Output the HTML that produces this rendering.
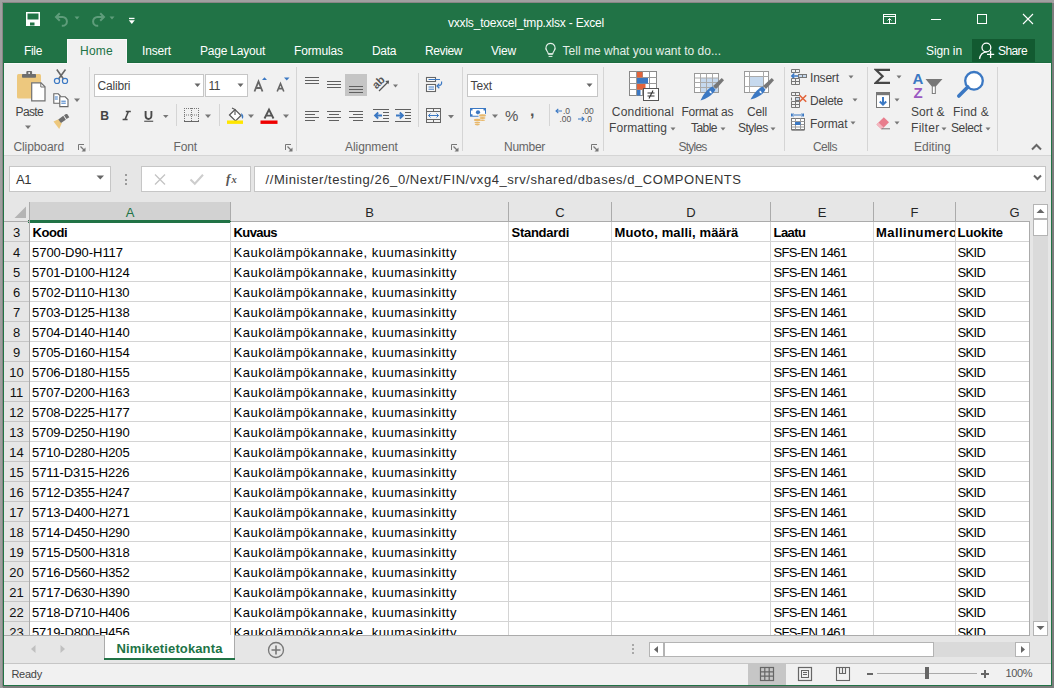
<!DOCTYPE html>
<html><head><meta charset="utf-8"><style>
html,body{margin:0;padding:0;width:1054px;height:688px;overflow:hidden;position:relative;font-family:"Liberation Sans", sans-serif;}
svg{display:block}
</style></head><body>
<div style="position:absolute;left:0px;top:0px;width:1054px;height:688px;background:#a0a0a0;"></div>
<div style="position:absolute;left:2px;top:2px;width:1050px;height:685px;background:#898686;"></div>
<div style="position:absolute;left:1052px;top:3px;width:2px;height:685px;background:#7c7c7c;"></div>
<div style="position:absolute;left:3px;top:686px;width:1051px;height:2px;background:#7c7c7c;"></div>
<div style="position:absolute;left:3px;top:3px;width:1049px;height:683px;background:#217346;"></div>
<div style="position:absolute;left:4px;top:62px;width:1047px;height:1px;background:#1c6b3f;"></div>
<div style="position:absolute;left:67px;top:39px;width:60px;height:24px;background:#f1f1f1;"></div>
<div style="position:absolute;left:67px;top:39px;width:60px;height:1px;background:#fafafa;"></div>
<div style="position:absolute;left:67px;top:39px;width:1px;height:24px;background:#fafafa;"></div>
<div style="position:absolute;left:126px;top:39px;width:1px;height:24px;background:#fafafa;"></div>
<div style="position:absolute;left:4px;top:63px;width:1047px;height:92px;background:#f1f1f1;"></div>
<div style="position:absolute;left:4px;top:63px;width:63px;height:1px;background:#fafafa;"></div>
<div style="position:absolute;left:127px;top:63px;width:924px;height:1px;background:#fafafa;"></div>
<div style="position:absolute;left:4px;top:155px;width:1047px;height:1px;background:#d5d5d5;"></div>
<div style="position:absolute;left:4px;top:156px;width:1047px;height:66px;background:#e6e6e6;"></div>
<svg style="position:absolute;left:24px;top:10px" width="18" height="18" viewBox="0 0 18 18"><path d="M2.75 2.75 H15.25 V15.25 H2.75z" fill="none" stroke="#fff" stroke-width="1.5"/><rect x="2" y="9.5" width="14" height="6" fill="#fff"/><rect x="6" y="12.5" width="4.5" height="3" fill="#217346"/></svg>
<svg style="position:absolute;left:53px;top:11px" width="30" height="16" viewBox="0 0 30 16"><path d="M3.5 6 H9.5 A4.4 4.4 0 0 1 9.5 14.8 H8.8" fill="none" stroke="#5f9d7b" stroke-width="2"/><path d="M6.8 2.2 L3 6 L6.8 9.8" fill="none" stroke="#5f9d7b" stroke-width="2"/><path d="M21.5 5.5 h5 l-2.5 3z" fill="#5f9d7b"/></svg>
<svg style="position:absolute;left:89px;top:11px" width="30" height="16" viewBox="0 0 30 16"><path d="M14.5 6 H8.5 A4.4 4.4 0 0 0 8.5 14.8 H9.2" fill="none" stroke="#5f9d7b" stroke-width="2"/><path d="M11.2 2.2 L15 6 L11.2 9.8" fill="none" stroke="#5f9d7b" stroke-width="2"/><path d="M20.5 5.5 h5 l-2.5 3z" fill="#5f9d7b"/></svg>
<svg style="position:absolute;left:127px;top:16px" width="9" height="10" viewBox="0 0 9 10"><rect x="2" y="1.8" width="5.5" height="1.3" fill="#fff"/><path d="M1.8 4.2 h6 l-3 3.8z" fill="#fff"/></svg>
<svg style="position:absolute;left:882px;top:13px" width="16" height="12" viewBox="0 0 16 12"><rect x="1.5" y="1.5" width="12" height="9" fill="none" stroke="#fff" stroke-width="1"/><path d="M1.5 3.5 h12" stroke="#fff" stroke-width="1"/><path d="M7.5 10.5 V5.5 M5.5 7.5 L7.5 5.5 L9.5 7.5" fill="none" stroke="#fff" stroke-width="1"/></svg>
<div style="position:absolute;left:931px;top:19px;width:10px;height:1px;background:#fff;"></div>
<svg style="position:absolute;left:976px;top:13px" width="12" height="12" viewBox="0 0 12 12"><rect x="1.5" y="1.5" width="9" height="9" fill="none" stroke="#fff" stroke-width="1"/></svg>
<svg style="position:absolute;left:1022px;top:13px" width="12" height="12" viewBox="0 0 12 12"><path d="M1 1 L11 11 M11 1 L1 11" stroke="#fff" stroke-width="1.1"/></svg>
<svg style="position:absolute;left:543px;top:42px" width="14" height="18" viewBox="0 0 14 18"><path d="M7.5 1.4 A4.6 4.6 0 0 0 3.9 8.9 C4.6 9.8 5.1 10.6 5.2 11.8 H9.8 C9.9 10.6 10.4 9.8 11.1 8.9 A4.6 4.6 0 0 0 7.5 1.4z" fill="none" stroke="#e4efe8" stroke-width="1.1"/><rect x="5.2" y="11.4" width="4.6" height="1.4" fill="#e4efe8"/><rect x="5.6" y="13.9" width="3.8" height="1" fill="#e4efe8"/></svg>
<div style="position:absolute;left:972px;top:39px;width:63px;height:23px;background:#125a31;"></div>
<svg style="position:absolute;left:978px;top:41px" width="18" height="21" viewBox="0 0 18 21"><circle cx="8.4" cy="6.5" r="4.4" fill="none" stroke="#fff" stroke-width="1.3"/><path d="M1.5 17.8 C2.2 13.8 5 11.2 8.8 10.9" fill="none" stroke="#fff" stroke-width="1.3"/><path d="M12.6 9.8 v7.2 M9 13.4 h7.2" stroke="#fff" stroke-width="1.3"/></svg>
<div style="position:absolute;left:89px;top:67px;width:1px;height:84px;background:#d5d5d5;"></div>
<div style="position:absolute;left:296px;top:67px;width:1px;height:84px;background:#d5d5d5;"></div>
<div style="position:absolute;left:462px;top:67px;width:1px;height:84px;background:#d5d5d5;"></div>
<div style="position:absolute;left:603px;top:67px;width:1px;height:84px;background:#d5d5d5;"></div>
<div style="position:absolute;left:784px;top:67px;width:1px;height:84px;background:#d5d5d5;"></div>
<div style="position:absolute;left:867px;top:67px;width:1px;height:84px;background:#d5d5d5;"></div>
<div style="position:absolute;left:997px;top:67px;width:1px;height:84px;background:#d5d5d5;"></div>
<div style="position:absolute;left:176px;top:104px;width:1px;height:22px;background:#d5d5d5;"></div>
<div style="position:absolute;left:219px;top:104px;width:1px;height:22px;background:#d5d5d5;"></div>
<div style="position:absolute;left:418px;top:73px;width:1px;height:54px;background:#d5d5d5;"></div>
<div style="position:absolute;left:549px;top:104px;width:1px;height:22px;background:#d5d5d5;"></div>
<svg style="position:absolute;left:78px;top:144px" width="8" height="8" viewBox="0 0 8 8"><path d="M0.5 6 V0.5 H6" fill="none" stroke="#777" stroke-width="1"/><path d="M2.5 2.5 L6 6" stroke="#777" stroke-width="1.2"/><path d="M7.5 3.5 V7.5 H3.5z" fill="#777"/></svg>
<svg style="position:absolute;left:285px;top:144px" width="8" height="8" viewBox="0 0 8 8"><path d="M0.5 6 V0.5 H6" fill="none" stroke="#777" stroke-width="1"/><path d="M2.5 2.5 L6 6" stroke="#777" stroke-width="1.2"/><path d="M7.5 3.5 V7.5 H3.5z" fill="#777"/></svg>
<svg style="position:absolute;left:451px;top:144px" width="8" height="8" viewBox="0 0 8 8"><path d="M0.5 6 V0.5 H6" fill="none" stroke="#777" stroke-width="1"/><path d="M2.5 2.5 L6 6" stroke="#777" stroke-width="1.2"/><path d="M7.5 3.5 V7.5 H3.5z" fill="#777"/></svg>
<svg style="position:absolute;left:591px;top:144px" width="8" height="8" viewBox="0 0 8 8"><path d="M0.5 6 V0.5 H6" fill="none" stroke="#777" stroke-width="1"/><path d="M2.5 2.5 L6 6" stroke="#777" stroke-width="1.2"/><path d="M7.5 3.5 V7.5 H3.5z" fill="#777"/></svg>
<svg style="position:absolute;left:15px;top:69px" width="32" height="34" viewBox="0 0 32 34"><rect x="2" y="5" width="24" height="24.6" rx="1.5" fill="#edc87e"/><rect x="7" y="5" width="14" height="3.8" rx="0.8" fill="#6d6d6d"/><rect x="11.3" y="2" width="5.8" height="3.6" rx="1" fill="#6d6d6d"/><rect x="13.3" y="3.2" width="1.7" height="1.7" fill="#f3f3f3"/><path d="M16.7 13.8 H26 L30 17.8 V31.8 H16.7z" fill="#fff" stroke="#707070" stroke-width="1.2"/><path d="M25.8 13.8 V18 H30" fill="none" stroke="#707070" stroke-width="1"/></svg>
<svg style="position:absolute;left:24px;top:124px" width="8" height="6" viewBox="0 0 8 6"><path d="M1 1.5 h6 l-3 3.5z" fill="#777"/></svg>
<svg style="position:absolute;left:52px;top:67px" width="17" height="17" viewBox="0 0 17 17"><path d="M4.8 2.5 L11.5 12 M13.5 2.5 L6.5 12" stroke="#666" stroke-width="1.6"/><circle cx="5" cy="14" r="2.6" fill="none" stroke="#3b78c3" stroke-width="1.2"/><circle cx="13" cy="14" r="2.6" fill="none" stroke="#3b78c3" stroke-width="1.2"/></svg>
<svg style="position:absolute;left:52px;top:92px" width="17" height="16" viewBox="0 0 17 16"><path d="M1.8 1.8 H6.2 L8.2 3.8 V11.2 H1.8z" fill="#fff" stroke="#666" stroke-width="1.1"/><path d="M7.8 4.8 H13.2 L16 7.6 V14.6 H7.8z" fill="#fff" stroke="#666" stroke-width="1.1"/><path d="M2.8 5 h3 M2.8 7 h3 M9.3 9.2 h4.5 M9.3 11.2 h4.5" stroke="#3b78c3" stroke-width="1"/></svg>
<svg style="position:absolute;left:73px;top:97px" width="8" height="6" viewBox="0 0 8 6"><path d="M1 1.5 h6 l-3 3.5z" fill="#777"/></svg>
<svg style="position:absolute;left:52px;top:114px" width="18" height="17" viewBox="0 0 18 17"><path d="M1.5 7.5 L6.5 5.2 L9.8 9.3 L7.2 15z" fill="#edc87e"/><path d="M6.3 5.6 L11.3 1.8 L13.8 5.8 L9 9z" fill="#6d6d6d"/><path d="M12 1.3 L14.8 -0.6 L17.3 3.3 L14.5 5.1z" fill="#6d6d6d"/></svg>
<div style="position:absolute;left:94px;top:74px;width:108px;height:21px;border:1px solid #c6c6c6;background:#fff"></div>
<div style="position:absolute;left:205px;top:74px;width:41px;height:21px;border:1px solid #c6c6c6;background:#fff"></div>
<svg style="position:absolute;left:194px;top:83px" width="8" height="5" viewBox="0 0 8 5"><path d="M0.5 0.5 h6 l-3 3.5z" fill="#666"/></svg>
<svg style="position:absolute;left:237px;top:83px" width="8" height="5" viewBox="0 0 8 5"><path d="M0.5 0.5 h6 l-3 3.5z" fill="#666"/></svg>
<svg style="position:absolute;left:253px;top:76px" width="16" height="17" viewBox="0 0 16 17"><path d="M1.5 15.5 L5.5 5.5 L9.5 15.5 M3 12 h5" fill="none" stroke="#666" stroke-width="1.8"/><path d="M9 4 h5 l-2.5 -2.8z" fill="#3b78c3"/></svg>
<svg style="position:absolute;left:276px;top:76px" width="15" height="17" viewBox="0 0 15 17"><path d="M1.2 15.5 L4.5 7.5 L7.8 15.5 M2.5 12.6 h4" fill="none" stroke="#666" stroke-width="1.6"/><path d="M8 1.5 h5.5 l-2.75 3z" fill="#3b78c3"/></svg>
<svg style="position:absolute;left:98px;top:108px" width="13" height="15" viewBox="0 0 13 15"><text x="2.2" y="12" font-size="12.2" font-weight="bold" font-family="Liberation Sans" fill="#444">B</text></svg>
<svg style="position:absolute;left:120px;top:108px" width="12" height="15" viewBox="0 0 12 15"><path d="M5.8 3.6 H10.8 M2.6 11.4 H7.6 M8.3 3.6 L5.1 11.4" fill="none" stroke="#4a4a4a" stroke-width="1.5"/></svg>
<svg style="position:absolute;left:142px;top:108px" width="13" height="16" viewBox="0 0 13 16"><path d="M3.6 3 V7.8 C3.6 12 9.4 12 9.4 7.8 V3" fill="none" stroke="#4a4a4a" stroke-width="1.9"/><rect x="2.2" y="12.7" width="9" height="1.1" fill="#4a4a4a"/></svg>
<svg style="position:absolute;left:162px;top:114px" width="8" height="6" viewBox="0 0 8 6"><path d="M1 1 h5.5 l-2.75 3z" fill="#777"/></svg>
<svg style="position:absolute;left:183px;top:107px" width="17" height="17" viewBox="0 0 17 17"><path d="M1.5 1 V14 M15.5 1 V14 M8.5 1 V14 M1 1.5 H16 M1 8 H16" fill="none" stroke="#777" stroke-width="1" stroke-dasharray="1 1"/><path d="M1 14.5 H16" stroke="#666" stroke-width="1"/></svg>
<svg style="position:absolute;left:204px;top:113px" width="8" height="6" viewBox="0 0 8 6"><path d="M1 1.5 h6 l-3 3.5z" fill="#777"/></svg>
<svg style="position:absolute;left:226px;top:106px" width="20" height="19" viewBox="0 0 20 19"><path d="M3.5 9 L9 3.5 L15 9.5 L9.5 15z" fill="#fff" stroke="#555" stroke-width="1.2"/><path d="M6 2 L9 3.5 V9" fill="none" stroke="#555" stroke-width="1.1"/><path d="M15 7 C17.5 8.5 18 11 16.5 13 C15.5 11.5 15.5 9 15 7z" fill="#3b78c3"/><rect x="1" y="14.5" width="16" height="3.4" fill="#ffe600"/></svg>
<svg style="position:absolute;left:247px;top:113px" width="8" height="6" viewBox="0 0 8 6"><path d="M1 1.5 h6 l-3 3.5z" fill="#777"/></svg>
<svg style="position:absolute;left:259px;top:106px" width="20" height="19" viewBox="0 0 20 19"><path d="M5.5 12.5 L10 3.5 L14.5 12.5 M7 9.6 h6" fill="none" stroke="#555" stroke-width="1.9"/><rect x="1.5" y="14.5" width="17" height="3.4" fill="#e00"/></svg>
<svg style="position:absolute;left:282px;top:113px" width="8" height="6" viewBox="0 0 8 6"><path d="M1 1.5 h6 l-3 3.5z" fill="#777"/></svg>
<div style="position:absolute;left:305px;top:77px;width:14px;height:1px;background:#606060;"></div>
<div style="position:absolute;left:305px;top:80px;width:14px;height:1px;background:#606060;"></div>
<div style="position:absolute;left:305px;top:83px;width:14px;height:1px;background:#606060;"></div>
<div style="position:absolute;left:327px;top:81px;width:14px;height:1px;background:#606060;"></div>
<div style="position:absolute;left:327px;top:84px;width:14px;height:1px;background:#606060;"></div>
<div style="position:absolute;left:327px;top:87px;width:14px;height:1px;background:#606060;"></div>
<div style="position:absolute;left:345px;top:74px;width:22px;height:22px;background:#c5c5c5;"></div>
<div style="position:absolute;left:349px;top:86px;width:14px;height:1px;background:#606060;"></div>
<div style="position:absolute;left:349px;top:89px;width:14px;height:1px;background:#606060;"></div>
<div style="position:absolute;left:349px;top:92px;width:14px;height:1px;background:#606060;"></div>
<svg style="position:absolute;left:371px;top:74px" width="28" height="20" viewBox="0 0 28 20"><text x="0" y="0" font-size="11" font-weight="bold" font-family="Liberation Sans" fill="#555" transform="translate(5.5 15.5) rotate(-45)">ab</text><path d="M8 17 L17.5 7.5" stroke="#555" stroke-width="1.2"/><path d="M14.2 7 L18 6.5 L17.5 10.3z" fill="#555"/><path d="M22 10.5 h5 l-2.5 3z" fill="#777"/></svg>
<svg style="position:absolute;left:425px;top:75px" width="19" height="18" viewBox="0 0 19 18"><rect x="1.5" y="2.5" width="9" height="4" fill="#fff" stroke="#666" stroke-width="1.1"/><rect x="1.5" y="9.5" width="9" height="7" fill="#fff" stroke="#666" stroke-width="1.1"/><path d="M3.5 4.5 H15 M3.5 12 H9 M3.5 14.2 H9" stroke="#3b78c3" stroke-width="1"/><path d="M16.6 6.5 C17 9.5 15.5 11 12.5 11" fill="none" stroke="#3b78c3" stroke-width="1.2"/><path d="M14.3 8.8 L12 11 L14.3 13.2" fill="none" stroke="#3b78c3" stroke-width="1.2"/></svg>
<div style="position:absolute;left:305px;top:111px;width:14px;height:1px;background:#606060;"></div>
<div style="position:absolute;left:327px;top:111px;width:14px;height:1px;background:#606060;"></div>
<div style="position:absolute;left:349px;top:111px;width:14px;height:1px;background:#606060;"></div>
<div style="position:absolute;left:305px;top:114px;width:10px;height:1px;background:#606060;"></div>
<div style="position:absolute;left:329px;top:114px;width:10px;height:1px;background:#606060;"></div>
<div style="position:absolute;left:353px;top:114px;width:10px;height:1px;background:#606060;"></div>
<div style="position:absolute;left:305px;top:117px;width:14px;height:1px;background:#606060;"></div>
<div style="position:absolute;left:327px;top:117px;width:14px;height:1px;background:#606060;"></div>
<div style="position:absolute;left:349px;top:117px;width:14px;height:1px;background:#606060;"></div>
<div style="position:absolute;left:305px;top:120px;width:10px;height:1px;background:#606060;"></div>
<div style="position:absolute;left:329px;top:120px;width:10px;height:1px;background:#606060;"></div>
<div style="position:absolute;left:353px;top:120px;width:10px;height:1px;background:#606060;"></div>
<div style="position:absolute;left:373px;top:109px;width:16px;height:1px;background:#606060;"></div>
<div style="position:absolute;left:383px;top:112px;width:6px;height:1px;background:#606060;"></div>
<div style="position:absolute;left:383px;top:115px;width:6px;height:1px;background:#606060;"></div>
<div style="position:absolute;left:383px;top:118px;width:6px;height:1px;background:#606060;"></div>
<div style="position:absolute;left:373px;top:121px;width:16px;height:1px;background:#606060;"></div>
<svg style="position:absolute;left:373px;top:111px" width="10" height="9" viewBox="0 0 10 9"><path d="M9 4.5 H3 M5.2 1.5 L2 4.5 L5.2 7.5" fill="none" stroke="#3b78c3" stroke-width="1.8"/></svg>
<div style="position:absolute;left:395px;top:109px;width:16px;height:1px;background:#606060;"></div>
<div style="position:absolute;left:405px;top:112px;width:6px;height:1px;background:#606060;"></div>
<div style="position:absolute;left:405px;top:115px;width:6px;height:1px;background:#606060;"></div>
<div style="position:absolute;left:405px;top:118px;width:6px;height:1px;background:#606060;"></div>
<div style="position:absolute;left:395px;top:121px;width:16px;height:1px;background:#606060;"></div>
<svg style="position:absolute;left:395px;top:111px" width="10" height="9" viewBox="0 0 10 9"><path d="M1 4.5 H7 M4.8 1.5 L8 4.5 L4.8 7.5" fill="none" stroke="#3b78c3" stroke-width="1.8"/></svg>
<svg style="position:absolute;left:425px;top:107px" width="17" height="17" viewBox="0 0 17 17"><rect x="1.5" y="1.5" width="14" height="14" fill="none" stroke="#666" stroke-width="1"/><path d="M1.5 4.5 h14 M1.5 12.5 h14 M8.5 1.5 v3 M8.5 12.5 v3" stroke="#666" stroke-width="1"/><path d="M3.5 8.5 h10" stroke="#3b78c3" stroke-width="1"/><path d="M5.5 6.5 L3.5 8.5 L5.5 10.5 M11.5 6.5 L13.5 8.5 L11.5 10.5" fill="none" stroke="#3b78c3" stroke-width="1"/></svg>
<svg style="position:absolute;left:447px;top:114px" width="8" height="6" viewBox="0 0 8 6"><path d="M1 1 h6 l-3 3.5z" fill="#777"/></svg>
<div style="position:absolute;left:467px;top:74px;width:129px;height:21px;border:1px solid #c6c6c6;background:#fff"></div>
<svg style="position:absolute;left:586px;top:83px" width="8" height="5" viewBox="0 0 8 5"><path d="M0.5 0.5 h6 l-3 3.5z" fill="#666"/></svg>
<svg style="position:absolute;left:468px;top:106px" width="20" height="20" viewBox="0 0 20 20"><rect x="2" y="2" width="16" height="8.7" fill="#3b78c3"/><path d="M4.5 3 H15.5 V4.5 H17 V8.2 H15.5 V9.7 H4.5 V8.2 H3 V4.5 H4.5z" fill="#fff"/><circle cx="10" cy="6.3" r="2.1" fill="#3b78c3"/><rect x="10.5" y="7.8" width="8" height="8" fill="#f1f1f1"/><ellipse cx="14.5" cy="9.4" rx="3.4" ry="1.2" fill="#e8b86b"/><ellipse cx="14.5" cy="12" rx="3" ry="0.9" fill="#e8b86b"/><ellipse cx="14.5" cy="14.2" rx="2.6" ry="0.8" fill="#e8b86b"/><ellipse cx="9.3" cy="14" rx="3.4" ry="1.2" fill="#e8b86b"/><ellipse cx="9.3" cy="16.6" rx="3" ry="0.9" fill="#e8b86b"/><ellipse cx="9.3" cy="18.6" rx="2.6" ry="0.8" fill="#e8b86b"/></svg>
<svg style="position:absolute;left:491px;top:113px" width="8" height="6" viewBox="0 0 8 6"><path d="M1 1.5 h6 l-3 3.5z" fill="#777"/></svg>
<svg style="position:absolute;left:555px;top:107px" width="19" height="16" viewBox="0 0 19 16"><text x="8" y="7" font-size="8.5" font-family="Liberation Sans" fill="#555">.0</text><text x="4.5" y="15" font-size="8.5" font-family="Liberation Sans" fill="#555">.00</text><path d="M1 4 h6 M3.3 1.8 L1 4 L3.3 6.2" fill="none" stroke="#3b78c3" stroke-width="1.1"/></svg>
<svg style="position:absolute;left:577px;top:107px" width="19" height="16" viewBox="0 0 19 16"><text x="5" y="7" font-size="8.5" font-family="Liberation Sans" fill="#555">.00</text><text x="8" y="15" font-size="8.5" font-family="Liberation Sans" fill="#555">.0</text><path d="M1 12 h6 M4.7 9.8 L7 12 L4.7 14.2" fill="none" stroke="#3b78c3" stroke-width="1.1"/></svg>
<svg style="position:absolute;left:628px;top:70px" width="32" height="32" viewBox="0 0 32 32"><rect x="1.5" y="1.5" width="27" height="24" fill="#fff" stroke="#888" stroke-width="1"/><path d="M1.5 7.5 h27 M1.5 13.5 h27 M1.5 19.5 h27 M8.5 1.5 v24 M14.5 1.5 v24 M21.5 1.5 v24" stroke="#999" stroke-width="1"/><rect x="9" y="2" width="5.5" height="5.5" fill="#e2643b"/><rect x="9" y="8" width="11" height="5.5" fill="#3b78c3"/><rect x="9" y="14" width="8.5" height="5.5" fill="#e2643b"/><rect x="9" y="20" width="3.5" height="5.5" fill="#3b78c3"/><rect x="15.5" y="18.5" width="15" height="12" fill="#fff" stroke="#555" stroke-width="1"/><path d="M19.5 23 h7 M19.5 26 h7 M25 20.5 L21 28.5" stroke="#333" stroke-width="1.1"/></svg>
<svg style="position:absolute;left:670px;top:127px" width="7" height="5" viewBox="0 0 7 5"><path d="M0.5 0.5 h5 l-2.5 3z" fill="#777"/></svg>
<svg style="position:absolute;left:693px;top:72px" width="32" height="30" viewBox="0 0 32 30"><rect x="1.5" y="1.5" width="24" height="19" fill="#fff" stroke="#999" stroke-width="1"/><rect x="7" y="6" width="18" height="14" fill="#c6d9ee"/><path d="M1.5 6 h24 M1.5 10.5 h24 M1.5 15.5 h24 M7.5 1.5 v19 M13.5 1.5 v19 M19.5 1.5 v19" stroke="#aaa" stroke-width="1"/><path d="M28.8 6 L31 8.2 L23 17 L20 14z" fill="#777"/><path d="M19.5 14.5 L22.5 17.5 C20 23 13 27 7.5 28.5 C10 23 14 17 19.5 14.5z" fill="#3b78c3"/><path d="M17 18.5 C18.5 19.5 19 20.5 18.5 21.5 C16.5 21 15.8 19.8 17 18.5z" fill="#fff"/></svg>
<svg style="position:absolute;left:720px;top:127px" width="7" height="5" viewBox="0 0 7 5"><path d="M0.5 0.5 h5 l-2.5 3z" fill="#777"/></svg>
<svg style="position:absolute;left:743px;top:70px" width="32" height="30" viewBox="0 0 32 30"><rect x="1.5" y="1.5" width="24" height="21" fill="#fff" stroke="#999" stroke-width="1"/><rect x="7" y="6.5" width="13.5" height="9.5" fill="#c6d9ee"/><path d="M1.5 6.5 h24 M1.5 16.5 h24 M6.5 1.5 v21 M20.5 1.5 v21" stroke="#aaa" stroke-width="1"/><path d="M28.8 8 L31 10.2 L23 19 L20 16z" fill="#777"/><path d="M19.5 16.5 L22.5 19.5 C20 25 13 28 7.5 29.5 C10 25 14 19 19.5 16.5z" fill="#3b78c3"/><path d="M17 20.5 C18.5 21.5 19 22.5 18.5 23.5 C16.5 23 15.8 21.8 17 20.5z" fill="#fff"/></svg>
<svg style="position:absolute;left:770px;top:127px" width="7" height="5" viewBox="0 0 7 5"><path d="M0.5 0.5 h5 l-2.5 3z" fill="#777"/></svg>
<svg style="position:absolute;left:790px;top:68px" width="19" height="18" viewBox="0 0 19 18"><path d="M1.5 1.5 H9.5 V4.5 H1.5z M5.5 1.5 V4.5" fill="none" stroke="#777" stroke-width="1"/><rect x="8.5" y="6.5" width="8" height="3" fill="#c6d9ee" stroke="#777" stroke-width="1"/><path d="M12.5 6.5 V9.5" stroke="#777" stroke-width="1"/><path d="M8 8 H1.8 M4.3 5.5 L1.8 8 L4.3 10.5" fill="none" stroke="#3b78c3" stroke-width="1.5"/><path d="M1.5 10.5 H9.5 V16.5 H1.5z M5.5 10.5 V16.5 M1.5 13.5 H9.5" fill="none" stroke="#777" stroke-width="1"/></svg>
<svg style="position:absolute;left:848px;top:75px" width="7" height="5" viewBox="0 0 7 5"><path d="M0.5 0.5 h5 l-2.5 3z" fill="#777"/></svg>
<svg style="position:absolute;left:790px;top:91px" width="19" height="18" viewBox="0 0 19 18"><path d="M1.5 1.5 H9.5 V4.5 H1.5z M5.5 1.5 V4.5" fill="none" stroke="#777" stroke-width="1"/><rect x="5.5" y="6.5" width="4" height="3" fill="#c6d9ee" stroke="#777" stroke-width="1"/><path d="M1.5 6.5 V9.5" stroke="#777" stroke-width="1"/><path d="M9.5 4.2 L16.2 10.8 M16.2 4.2 L9.5 10.8" stroke="#e2643b" stroke-width="1.6"/><path d="M1.5 10.5 H9.5 V16.5 H1.5z M5.5 10.5 V16.5 M1.5 13.5 H9.5" fill="none" stroke="#777" stroke-width="1"/></svg>
<svg style="position:absolute;left:852px;top:98px" width="7" height="5" viewBox="0 0 7 5"><path d="M0.5 0.5 h5 l-2.5 3z" fill="#777"/></svg>
<svg style="position:absolute;left:790px;top:113px" width="17" height="19" viewBox="0 0 17 19"><path d="M1.5 0.5 V3.5 M13.5 0.5 V3.5 M1.5 2 H13.5 M3.5 0.3 L1.5 2 L3.5 3.7 M11.5 0.3 L13.5 2 L11.5 3.7" fill="none" stroke="#3b78c3" stroke-width="1"/><rect x="1.5" y="5.5" width="13" height="11" fill="#fff" stroke="#777" stroke-width="1"/><path d="M1.5 8.5 H14.5 M1.5 11.5 H14.5 M1.5 14 H14.5 M5.5 5.5 V16.5 M10.5 5.5 V16.5" stroke="#999" stroke-width="1"/><rect x="5" y="9" width="5.5" height="3" fill="#3b78c3"/><path d="M1.5 17.5 H14.5" stroke="#999" stroke-width="1"/></svg>
<svg style="position:absolute;left:850px;top:121px" width="7" height="5" viewBox="0 0 7 5"><path d="M0.5 0.5 h5 l-2.5 3z" fill="#777"/></svg>
<svg style="position:absolute;left:874px;top:68px" width="17" height="17" viewBox="0 0 17 17"><path d="M16 1.8 H1.8 L8.6 8.3 L1.8 14.8 H16" fill="none" stroke="#474747" stroke-width="2.2" stroke-linejoin="miter"/></svg>
<svg style="position:absolute;left:896px;top:75px" width="7" height="5" viewBox="0 0 7 5"><path d="M0.5 0.5 h5 l-2.5 3z" fill="#777"/></svg>
<svg style="position:absolute;left:875px;top:91px" width="16" height="18" viewBox="0 0 16 18"><rect x="1.5" y="1.5" width="13" height="15" fill="#fff" stroke="#777" stroke-width="1"/><rect x="1" y="1" width="14" height="3.2" fill="#777"/><path d="M8 6 V13.5 M4.8 10.5 L8 13.7 L11.2 10.5" fill="none" stroke="#3b78c3" stroke-width="2"/></svg>
<svg style="position:absolute;left:894px;top:98px" width="7" height="5" viewBox="0 0 7 5"><path d="M0.5 0.5 h5 l-2.5 3z" fill="#777"/></svg>
<svg style="position:absolute;left:875px;top:115px" width="17" height="16" viewBox="0 0 17 16"><path d="M1.5 9.5 L8.8 2.2 L14 7.2 L6.8 14.5z" fill="#e87d8d"/><path d="M1.5 9.5 L3.5 7.5 L8.8 12.6 L6.8 14.5z" fill="#f3b7c0"/><path d="M6.5 13.8 H15" stroke="#777" stroke-width="1"/></svg>
<svg style="position:absolute;left:894px;top:121px" width="7" height="5" viewBox="0 0 7 5"><path d="M0.5 0.5 h5 l-2.5 3z" fill="#777"/></svg>
<svg style="position:absolute;left:912px;top:70px" width="32" height="30" viewBox="0 0 32 30"><text x="0.5" y="13.5" font-size="15" font-weight="bold" font-family="Liberation Sans" fill="#3b78c3">A</text><text x="1.5" y="28" font-size="15" font-weight="bold" font-family="Liberation Sans" fill="#9a59c2">Z</text><path d="M13.5 9 H30.5 L23.8 16.5 V24 H19.8 V16.5z" fill="#777"/><rect x="20.8" y="16.5" width="2" height="6.6" fill="#fff"/></svg>
<svg style="position:absolute;left:941px;top:127px" width="7" height="5" viewBox="0 0 7 5"><path d="M0.5 0.5 h5 l-2.5 3z" fill="#777"/></svg>
<svg style="position:absolute;left:956px;top:70px" width="30" height="30" viewBox="0 0 30 30"><circle cx="18" cy="10.8" r="8.8" fill="#fff" stroke="#3b78c3" stroke-width="2.3"/><path d="M11.8 17 L2.8 26" stroke="#3b78c3" stroke-width="3.6" stroke-linecap="round"/></svg>
<svg style="position:absolute;left:985px;top:127px" width="7" height="5" viewBox="0 0 7 5"><path d="M0.5 0.5 h5 l-2.5 3z" fill="#777"/></svg>
<svg style="position:absolute;left:1031px;top:143px" width="11" height="8" viewBox="0 0 11 8"><path d="M1 6.5 L5.5 2 L10 6.5" fill="none" stroke="#666" stroke-width="2"/></svg>
<div style="position:absolute;left:9px;top:166px;width:100px;height:24px;border:1px solid #c6c6c6;background:#fff"></div>
<svg style="position:absolute;left:96px;top:175px" width="9" height="6" viewBox="0 0 9 6"><path d="M0.5 0.5 h7.5 l-3.75 4z" fill="#666"/></svg>
<div style="position:absolute;left:125px;top:174px;width:2px;height:2px;background:#9a9a9a;"></div>
<div style="position:absolute;left:125px;top:179px;width:2px;height:2px;background:#9a9a9a;"></div>
<div style="position:absolute;left:125px;top:183px;width:2px;height:2px;background:#9a9a9a;"></div>
<div style="position:absolute;left:141px;top:166px;width:108px;height:24px;border:1px solid #c6c6c6;background:#fff"></div>
<svg style="position:absolute;left:153px;top:173px" width="14" height="13" viewBox="0 0 14 13"><path d="M2 1.5 L12 11.5 M12 1.5 L2 11.5" stroke="#c4c4c4" stroke-width="1.3"/></svg>
<svg style="position:absolute;left:188px;top:172px" width="17" height="14" viewBox="0 0 17 14"><path d="M2.5 7.5 L6.8 11.8 L15 2.8" fill="none" stroke="#cdcdcd" stroke-width="2.1"/></svg>
<svg style="position:absolute;left:224px;top:170px" width="18" height="18" viewBox="0 0 18 18"><text x="2" y="13" font-size="13" font-style="italic" font-weight="bold" font-family="Liberation Serif" fill="#555">f</text><text x="7.5" y="13" font-size="10.5" font-style="italic" font-weight="bold" font-family="Liberation Serif" fill="#555">x</text></svg>
<div style="position:absolute;left:254px;top:166px;width:790px;height:24px;border:1px solid #c6c6c6;background:#fff"></div>
<svg style="position:absolute;left:1033px;top:174px" width="9" height="7" viewBox="0 0 9 7"><path d="M1 1.5 L4.5 5 L8 1.5" fill="none" stroke="#666" stroke-width="2"/></svg>
<div style="position:absolute;left:29px;top:222px;width:1000px;height:413px;background:#ffffff;"></div>
<div style="position:absolute;left:4px;top:222px;width:25px;height:413px;background:#e6e6e6;"></div>
<div style="position:absolute;left:30px;top:202px;width:200px;height:19px;background:#d2d2d2;"></div>
<div style="position:absolute;left:28px;top:220px;width:203px;height:3px;background:#217346;"></div>
<div style="position:absolute;left:4px;top:221px;width:26px;height:1px;background:#ababab;"></div>
<div style="position:absolute;left:231px;top:221px;width:798px;height:1px;background:#ababab;"></div>
<div style="position:absolute;left:29px;top:202px;width:1px;height:19px;background:#ababab;"></div>
<div style="position:absolute;left:230px;top:202px;width:1px;height:19px;background:#ababab;"></div>
<div style="position:absolute;left:508px;top:202px;width:1px;height:19px;background:#ababab;"></div>
<div style="position:absolute;left:611px;top:202px;width:1px;height:19px;background:#ababab;"></div>
<div style="position:absolute;left:770px;top:202px;width:1px;height:19px;background:#ababab;"></div>
<div style="position:absolute;left:873px;top:202px;width:1px;height:19px;background:#ababab;"></div>
<div style="position:absolute;left:955px;top:202px;width:1px;height:19px;background:#ababab;"></div>
<div style="position:absolute;left:4px;top:202px;width:0px;height:0px;background:#000;"></div>
<svg style="position:absolute;left:14px;top:206px" width="13" height="13" viewBox="0 0 13 13"><path d="M12 0.5 V12 H0.5z" fill="#b4b4b4"/></svg>
<div style="position:absolute;left:29px;top:222px;width:1px;height:413px;background:#ababab;"></div>
<div style="position:absolute;left:30px;top:241px;width:999px;height:1px;background:#d4d4d4;"></div>
<div style="position:absolute;left:4px;top:241px;width:25px;height:1px;background:#c6c6c6;"></div>
<div style="position:absolute;left:30px;top:261px;width:999px;height:1px;background:#d4d4d4;"></div>
<div style="position:absolute;left:4px;top:261px;width:25px;height:1px;background:#c6c6c6;"></div>
<div style="position:absolute;left:30px;top:281px;width:999px;height:1px;background:#d4d4d4;"></div>
<div style="position:absolute;left:4px;top:281px;width:25px;height:1px;background:#c6c6c6;"></div>
<div style="position:absolute;left:30px;top:301px;width:999px;height:1px;background:#d4d4d4;"></div>
<div style="position:absolute;left:4px;top:301px;width:25px;height:1px;background:#c6c6c6;"></div>
<div style="position:absolute;left:30px;top:321px;width:999px;height:1px;background:#d4d4d4;"></div>
<div style="position:absolute;left:4px;top:321px;width:25px;height:1px;background:#c6c6c6;"></div>
<div style="position:absolute;left:30px;top:341px;width:999px;height:1px;background:#d4d4d4;"></div>
<div style="position:absolute;left:4px;top:341px;width:25px;height:1px;background:#c6c6c6;"></div>
<div style="position:absolute;left:30px;top:361px;width:999px;height:1px;background:#d4d4d4;"></div>
<div style="position:absolute;left:4px;top:361px;width:25px;height:1px;background:#c6c6c6;"></div>
<div style="position:absolute;left:30px;top:381px;width:999px;height:1px;background:#d4d4d4;"></div>
<div style="position:absolute;left:4px;top:381px;width:25px;height:1px;background:#c6c6c6;"></div>
<div style="position:absolute;left:30px;top:401px;width:999px;height:1px;background:#d4d4d4;"></div>
<div style="position:absolute;left:4px;top:401px;width:25px;height:1px;background:#c6c6c6;"></div>
<div style="position:absolute;left:30px;top:421px;width:999px;height:1px;background:#d4d4d4;"></div>
<div style="position:absolute;left:4px;top:421px;width:25px;height:1px;background:#c6c6c6;"></div>
<div style="position:absolute;left:30px;top:441px;width:999px;height:1px;background:#d4d4d4;"></div>
<div style="position:absolute;left:4px;top:441px;width:25px;height:1px;background:#c6c6c6;"></div>
<div style="position:absolute;left:30px;top:461px;width:999px;height:1px;background:#d4d4d4;"></div>
<div style="position:absolute;left:4px;top:461px;width:25px;height:1px;background:#c6c6c6;"></div>
<div style="position:absolute;left:30px;top:481px;width:999px;height:1px;background:#d4d4d4;"></div>
<div style="position:absolute;left:4px;top:481px;width:25px;height:1px;background:#c6c6c6;"></div>
<div style="position:absolute;left:30px;top:501px;width:999px;height:1px;background:#d4d4d4;"></div>
<div style="position:absolute;left:4px;top:501px;width:25px;height:1px;background:#c6c6c6;"></div>
<div style="position:absolute;left:30px;top:521px;width:999px;height:1px;background:#d4d4d4;"></div>
<div style="position:absolute;left:4px;top:521px;width:25px;height:1px;background:#c6c6c6;"></div>
<div style="position:absolute;left:30px;top:541px;width:999px;height:1px;background:#d4d4d4;"></div>
<div style="position:absolute;left:4px;top:541px;width:25px;height:1px;background:#c6c6c6;"></div>
<div style="position:absolute;left:30px;top:561px;width:999px;height:1px;background:#d4d4d4;"></div>
<div style="position:absolute;left:4px;top:561px;width:25px;height:1px;background:#c6c6c6;"></div>
<div style="position:absolute;left:30px;top:581px;width:999px;height:1px;background:#d4d4d4;"></div>
<div style="position:absolute;left:4px;top:581px;width:25px;height:1px;background:#c6c6c6;"></div>
<div style="position:absolute;left:30px;top:601px;width:999px;height:1px;background:#d4d4d4;"></div>
<div style="position:absolute;left:4px;top:601px;width:25px;height:1px;background:#c6c6c6;"></div>
<div style="position:absolute;left:30px;top:621px;width:999px;height:1px;background:#d4d4d4;"></div>
<div style="position:absolute;left:4px;top:621px;width:25px;height:1px;background:#c6c6c6;"></div>
<div style="position:absolute;left:230px;top:222px;width:1px;height:413px;background:#d4d4d4;"></div>
<div style="position:absolute;left:508px;top:222px;width:1px;height:413px;background:#d4d4d4;"></div>
<div style="position:absolute;left:611px;top:222px;width:1px;height:413px;background:#d4d4d4;"></div>
<div style="position:absolute;left:770px;top:222px;width:1px;height:413px;background:#d4d4d4;"></div>
<div style="position:absolute;left:873px;top:222px;width:1px;height:413px;background:#d4d4d4;"></div>
<div style="position:absolute;left:955px;top:222px;width:1px;height:413px;background:#d4d4d4;"></div>
<div style="position:absolute;left:1029px;top:221px;width:1px;height:415px;background:#ababab;"></div>
<div style="position:absolute;left:4px;top:635px;width:1026px;height:1px;background:#ababab;"></div>
<div style="position:absolute;left:874px;top:222px;width:81px;height:19px;overflow:hidden"><div style="position:absolute;left:2px;top:4.00px;font-size:13px;line-height:1;font-weight:700;color:#000;letter-spacing:0.45px;white-space:pre">Mallinumero</div></div>
<div style="position:absolute;left:1030px;top:202px;width:21px;height:434px;background:#e6e6e6;"></div>
<div style="position:absolute;left:1033px;top:219px;width:15px;height:402px;background:#dadada;"></div>
<div style="position:absolute;left:1033px;top:204px;width:13px;height:13px;border:1px solid #b4b4b4;background:#fff"></div>
<svg style="position:absolute;left:1035px;top:207px" width="11" height="8" viewBox="0 0 11 8"><path d="M1.5 6 L5.5 2 L9.5 6z" fill="#666"/></svg>
<div style="position:absolute;left:1033px;top:219px;width:13px;height:15px;border:1px solid #b4b4b4;background:#fff"></div>
<div style="position:absolute;left:1033px;top:621px;width:13px;height:13px;border:1px solid #b4b4b4;background:#fff"></div>
<svg style="position:absolute;left:1035px;top:624px" width="11" height="8" viewBox="0 0 11 8"><path d="M1.5 2 L9.5 2 L5.5 6z" fill="#666"/></svg>
<div style="position:absolute;left:4px;top:636px;width:1047px;height:27px;background:#e6e6e6;"></div>
<svg style="position:absolute;left:29px;top:644px" width="9" height="10" viewBox="0 0 9 10"><path d="M6.5 1 L2 5 L6.5 9z" fill="#c0c0c0"/></svg>
<svg style="position:absolute;left:58px;top:644px" width="9" height="10" viewBox="0 0 9 10"><path d="M2.5 1 L7 5 L2.5 9z" fill="#c0c0c0"/></svg>
<div style="position:absolute;left:104px;top:635px;width:129px;height:23px;border-left:1px solid #ababab;border-right:1px solid #ababab;background:#fff"></div>
<div style="position:absolute;left:104px;top:658px;width:131px;height:2px;background:#217346;"></div>
<svg style="position:absolute;left:266px;top:640px" width="20" height="20" viewBox="0 0 20 20"><circle cx="10" cy="10" r="7.5" fill="none" stroke="#777" stroke-width="1.3"/><path d="M10 5.5 V14.5 M5.5 10 H14.5" stroke="#777" stroke-width="1.6"/></svg>
<div style="position:absolute;left:632px;top:644px;width:2px;height:2px;background:#a8a8a8;"></div>
<div style="position:absolute;left:632px;top:648px;width:2px;height:2px;background:#a8a8a8;"></div>
<div style="position:absolute;left:632px;top:652px;width:2px;height:2px;background:#a8a8a8;"></div>
<div style="position:absolute;left:649px;top:642px;width:381px;height:15px;background:#dadada;"></div>
<div style="position:absolute;left:649px;top:642px;width:13px;height:13px;border:1px solid #b4b4b4;background:#fff"></div>
<svg style="position:absolute;left:652px;top:645px" width="9" height="9" viewBox="0 0 9 9"><path d="M6 1 L2 4.5 L6 8z" fill="#666"/></svg>
<div style="position:absolute;left:663px;top:642px;width:268px;height:13px;border:1px solid #b4b4b4;border-left:2px solid #b4b4b4;background:#fff"></div>
<div style="position:absolute;left:1015px;top:642px;width:13px;height:13px;border:1px solid #b4b4b4;background:#fff"></div>
<svg style="position:absolute;left:1018px;top:645px" width="9" height="9" viewBox="0 0 9 9"><path d="M3 1 L7 4.5 L3 8z" fill="#666"/></svg>
<div style="position:absolute;left:4px;top:663px;width:1047px;height:1px;background:#c6c6c6;"></div>
<div style="position:absolute;left:4px;top:664px;width:1047px;height:21px;background:#f1f1f1;"></div>
<div style="position:absolute;left:748px;top:664px;width:38px;height:21px;background:#c6c6c6;"></div>
<svg style="position:absolute;left:759px;top:666px" width="16" height="16" viewBox="0 0 16 16"><rect x="1.5" y="1.5" width="13" height="13" fill="none" stroke="#666" stroke-width="1.2"/><path d="M1.5 5.8 h13 M1.5 10.2 h13 M5.8 1.5 v13 M10.2 1.5 v13" stroke="#666" stroke-width="1.2"/></svg>
<svg style="position:absolute;left:797px;top:666px" width="16" height="16" viewBox="0 0 16 16"><rect x="1.5" y="1.5" width="13" height="13" fill="none" stroke="#666" stroke-width="1.2"/><rect x="4.5" y="4.5" width="7" height="7" fill="none" stroke="#666" stroke-width="1"/><path d="M6 6.5 h4 M6 8.5 h4" stroke="#666" stroke-width="1"/></svg>
<svg style="position:absolute;left:835px;top:666px" width="16" height="16" viewBox="0 0 16 16"><rect x="1.5" y="1.5" width="13" height="13" fill="none" stroke="#666" stroke-width="1.1"/><path d="M4.5 1.5 V7.5 H10.5 V1.5 M7.5 1.5 V7.5" fill="none" stroke="#666" stroke-width="1.1"/></svg>
<div style="position:absolute;left:867px;top:673px;width:6px;height:2px;background:#666;"></div>
<div style="position:absolute;left:877px;top:673px;width:100px;height:1px;background:#aaa;"></div>
<div style="position:absolute;left:925px;top:667px;width:4px;height:12px;background:#666;"></div>
<div style="position:absolute;left:981px;top:673px;width:8px;height:2px;background:#666;"></div>
<div style="position:absolute;left:984px;top:670px;width:2px;height:8px;background:#666;"></div>
<div style="position:absolute;left:448.00px;top:16.84px;font-size:12px;line-height:1;color:#ffffff;font-weight:400;letter-spacing:-0.202px;white-space:pre;">vxxls_toexcel_tmp.xlsx - Excel</div>
<div style="position:absolute;left:24.00px;top:44.84px;font-size:12px;line-height:1;color:#ffffff;font-weight:400;letter-spacing:-0.336px;white-space:pre;">File</div>
<div style="position:absolute;left:80.00px;top:44.84px;font-size:12px;line-height:1;color:#217346;font-weight:400;letter-spacing:0.246px;white-space:pre;">Home</div>
<div style="position:absolute;left:142.00px;top:44.84px;font-size:12px;line-height:1;color:#ffffff;font-weight:400;letter-spacing:-0.169px;white-space:pre;">Insert</div>
<div style="position:absolute;left:200.00px;top:44.84px;font-size:12px;line-height:1;color:#ffffff;font-weight:400;letter-spacing:-0.217px;white-space:pre;">Page Layout</div>
<div style="position:absolute;left:294.00px;top:44.84px;font-size:12px;line-height:1;color:#ffffff;font-weight:400;letter-spacing:-0.127px;white-space:pre;">Formulas</div>
<div style="position:absolute;left:372.00px;top:44.84px;font-size:12px;line-height:1;color:#ffffff;font-weight:400;letter-spacing:-0.340px;white-space:pre;">Data</div>
<div style="position:absolute;left:425.00px;top:44.84px;font-size:12px;line-height:1;color:#ffffff;font-weight:400;letter-spacing:-0.393px;white-space:pre;">Review</div>
<div style="position:absolute;left:491.00px;top:44.84px;font-size:12px;line-height:1;color:#ffffff;font-weight:400;letter-spacing:-0.199px;white-space:pre;">View</div>
<div style="position:absolute;left:562.60px;top:44.84px;font-size:12px;line-height:1;color:#e4efe8;font-weight:400;letter-spacing:0.010px;white-space:pre;">Tell me what you want to do...</div>
<div style="position:absolute;left:926.00px;top:44.84px;font-size:12px;line-height:1;color:#ffffff;font-weight:400;letter-spacing:-0.100px;white-space:pre;">Sign in</div>
<div style="position:absolute;left:998.00px;top:44.84px;font-size:12px;line-height:1;color:#ffffff;font-weight:400;letter-spacing:-0.606px;white-space:pre;">Share</div>
<div style="position:absolute;left:13.40px;top:140.84px;font-size:12px;line-height:1;color:#666666;font-weight:400;letter-spacing:-0.086px;white-space:pre;">Clipboard</div>
<div style="position:absolute;left:173.60px;top:140.84px;font-size:12px;line-height:1;color:#666666;font-weight:400;letter-spacing:-0.154px;white-space:pre;">Font</div>
<div style="position:absolute;left:345.00px;top:140.84px;font-size:12px;line-height:1;color:#666666;font-weight:400;letter-spacing:-0.064px;white-space:pre;">Alignment</div>
<div style="position:absolute;left:504.00px;top:140.84px;font-size:12px;line-height:1;color:#666666;font-weight:400;letter-spacing:-0.281px;white-space:pre;">Number</div>
<div style="position:absolute;left:678.40px;top:140.84px;font-size:12px;line-height:1;color:#666666;font-weight:400;letter-spacing:-0.748px;white-space:pre;">Styles</div>
<div style="position:absolute;left:813.00px;top:140.84px;font-size:12px;line-height:1;color:#666666;font-weight:400;letter-spacing:-0.574px;white-space:pre;">Cells</div>
<div style="position:absolute;left:914.00px;top:140.84px;font-size:12px;line-height:1;color:#666666;font-weight:400;letter-spacing:-0.000px;white-space:pre;">Editing</div>
<div style="position:absolute;left:15.60px;top:105.84px;font-size:12px;line-height:1;color:#444444;font-weight:400;letter-spacing:-0.637px;white-space:pre;">Paste</div>
<div style="position:absolute;left:97.40px;top:79.84px;font-size:12px;line-height:1;color:#444444;font-weight:400;letter-spacing:-0.145px;white-space:pre;">Calibri</div>
<div style="position:absolute;left:208.60px;top:79.84px;font-size:12px;line-height:1;color:#444444;font-weight:400;letter-spacing:-0.734px;white-space:pre;">11</div>
<div style="position:absolute;left:470.60px;top:79.84px;font-size:12px;line-height:1;color:#444444;font-weight:400;letter-spacing:-0.179px;white-space:pre;">Text</div>
<div style="position:absolute;left:505.00px;top:108.30px;font-size:15px;line-height:1;color:#555;font-weight:400;letter-spacing:0.000px;white-space:pre;">%</div>
<div style="position:absolute;left:530.00px;top:103.46px;font-size:16px;line-height:1;color:#555;font-weight:700;letter-spacing:0.000px;white-space:pre;">,</div>
<div style="position:absolute;left:611.80px;top:105.84px;font-size:12px;line-height:1;color:#444444;font-weight:400;letter-spacing:0.196px;white-space:pre;">Conditional</div>
<div style="position:absolute;left:609.00px;top:121.84px;font-size:12px;line-height:1;color:#444444;font-weight:400;letter-spacing:0.064px;white-space:pre;">Formatting</div>
<div style="position:absolute;left:681.40px;top:105.84px;font-size:12px;line-height:1;color:#444444;font-weight:400;letter-spacing:-0.246px;white-space:pre;">Format as</div>
<div style="position:absolute;left:691.00px;top:121.84px;font-size:12px;line-height:1;color:#444444;font-weight:400;letter-spacing:-0.537px;white-space:pre;">Table</div>
<div style="position:absolute;left:747.00px;top:105.84px;font-size:12px;line-height:1;color:#444444;font-weight:400;letter-spacing:-0.168px;white-space:pre;">Cell</div>
<div style="position:absolute;left:738.00px;top:121.84px;font-size:12px;line-height:1;color:#444444;font-weight:400;letter-spacing:-0.498px;white-space:pre;">Styles</div>
<div style="position:absolute;left:810.00px;top:71.84px;font-size:12px;line-height:1;color:#444444;font-weight:400;letter-spacing:-0.203px;white-space:pre;">Insert</div>
<div style="position:absolute;left:810.00px;top:94.84px;font-size:12px;line-height:1;color:#444444;font-weight:400;letter-spacing:-0.281px;white-space:pre;">Delete</div>
<div style="position:absolute;left:810.00px;top:117.84px;font-size:12px;line-height:1;color:#444444;font-weight:400;letter-spacing:-0.103px;white-space:pre;">Format</div>
<div style="position:absolute;left:911.00px;top:105.84px;font-size:12px;line-height:1;color:#444444;font-weight:400;letter-spacing:0.040px;white-space:pre;">Sort &amp;</div>
<div style="position:absolute;left:911.00px;top:121.84px;font-size:12px;line-height:1;color:#444444;font-weight:400;letter-spacing:0.305px;white-space:pre;">Filter</div>
<div style="position:absolute;left:953.00px;top:105.84px;font-size:12px;line-height:1;color:#444444;font-weight:400;letter-spacing:0.219px;white-space:pre;">Find &amp;</div>
<div style="position:absolute;left:951.00px;top:121.84px;font-size:12px;line-height:1;color:#444444;font-weight:400;letter-spacing:-0.393px;white-space:pre;">Select</div>
<div style="position:absolute;left:16.00px;top:173.00px;font-size:13px;line-height:1;color:#333;font-weight:400;letter-spacing:-0.453px;white-space:pre;">A1</div>
<div style="position:absolute;left:265.60px;top:173.00px;font-size:13px;line-height:1;color:#333;font-weight:400;letter-spacing:0.561px;white-space:pre;">//Minister/testing/26_0/Next/FIN/vxg4_srv/shared/dbases/d_COMPONENTS</div>
<div style="position:absolute;left:125.66px;top:206.00px;font-size:13px;line-height:1;color:#217346;font-weight:400;letter-spacing:0.000px;white-space:pre;">A</div>
<div style="position:absolute;left:365.16px;top:206.00px;font-size:13px;line-height:1;color:#262626;font-weight:400;letter-spacing:0.000px;white-space:pre;">B</div>
<div style="position:absolute;left:555.30px;top:206.00px;font-size:13px;line-height:1;color:#262626;font-weight:400;letter-spacing:0.000px;white-space:pre;">C</div>
<div style="position:absolute;left:686.30px;top:206.00px;font-size:13px;line-height:1;color:#262626;font-weight:400;letter-spacing:0.000px;white-space:pre;">D</div>
<div style="position:absolute;left:817.66px;top:206.00px;font-size:13px;line-height:1;color:#262626;font-weight:400;letter-spacing:0.000px;white-space:pre;">E</div>
<div style="position:absolute;left:910.52px;top:206.00px;font-size:13px;line-height:1;color:#262626;font-weight:400;letter-spacing:0.000px;white-space:pre;">F</div>
<div style="position:absolute;left:1009.44px;top:206.00px;font-size:13px;line-height:1;color:#262626;font-weight:400;letter-spacing:0.000px;white-space:pre;">G</div>
<div style="position:absolute;left:116.50px;top:642.00px;font-size:13px;line-height:1;color:#217346;font-weight:700;letter-spacing:0.122px;white-space:pre;">Nimiketietokanta</div>
<div style="position:absolute;left:11.40px;top:668.69px;font-size:11px;line-height:1;color:#444;font-weight:400;letter-spacing:-0.239px;white-space:pre;">Ready</div>
<div style="position:absolute;left:1005.60px;top:667.69px;font-size:11px;line-height:1;color:#555;font-weight:400;letter-spacing:-0.435px;white-space:pre;">100%</div>
<div style="position:absolute;left:0;top:222px;width:1029px;height:413px;overflow:hidden"><div style="position:absolute;left:0;top:-222px;width:1054px;height:688px">
<div style="position:absolute;left:12.88px;top:226.00px;font-size:13px;line-height:1;color:#111;font-weight:400;letter-spacing:0.000px;white-space:pre;">3</div>
<div style="position:absolute;left:32.60px;top:226.00px;font-size:13px;line-height:1;color:#000;font-weight:700;letter-spacing:-0.446px;white-space:pre;">Koodi</div>
<div style="position:absolute;left:233.50px;top:226.00px;font-size:13px;line-height:1;color:#000;font-weight:700;letter-spacing:-0.578px;white-space:pre;">Kuvaus</div>
<div style="position:absolute;left:511.50px;top:226.00px;font-size:13px;line-height:1;color:#000;font-weight:700;letter-spacing:-0.263px;white-space:pre;">Standardi</div>
<div style="position:absolute;left:614.50px;top:226.00px;font-size:13px;line-height:1;color:#000;font-weight:700;letter-spacing:0.138px;white-space:pre;">Muoto, malli, määrä</div>
<div style="position:absolute;left:773.50px;top:226.00px;font-size:13px;line-height:1;color:#000;font-weight:700;letter-spacing:-0.534px;white-space:pre;">Laatu</div>
<div style="position:absolute;left:957.60px;top:226.00px;font-size:13px;line-height:1;color:#000;font-weight:700;letter-spacing:-0.119px;white-space:pre;">Luokite</div>
<div style="position:absolute;left:12.88px;top:246.00px;font-size:13px;line-height:1;color:#111;font-weight:400;letter-spacing:0.000px;white-space:pre;">4</div>
<div style="position:absolute;left:32.00px;top:246.00px;font-size:13px;line-height:1;color:#000;font-weight:400;letter-spacing:-0.042px;white-space:pre;">5700-D90-H117</div>
<div style="position:absolute;left:233.60px;top:246.00px;font-size:13px;line-height:1;color:#000;font-weight:400;letter-spacing:0.497px;white-space:pre;">Kaukolämpökannake, kuumasinkitty</div>
<div style="position:absolute;left:773.50px;top:246.00px;font-size:13px;line-height:1;color:#000;font-weight:400;letter-spacing:-0.655px;white-space:pre;">SFS-EN 1461</div>
<div style="position:absolute;left:957.60px;top:246.00px;font-size:13px;line-height:1;color:#000;font-weight:400;letter-spacing:-0.661px;white-space:pre;">SKID</div>
<div style="position:absolute;left:12.88px;top:266.00px;font-size:13px;line-height:1;color:#111;font-weight:400;letter-spacing:0.000px;white-space:pre;">5</div>
<div style="position:absolute;left:32.00px;top:266.00px;font-size:13px;line-height:1;color:#000;font-weight:400;letter-spacing:-0.160px;white-space:pre;">5701-D100-H124</div>
<div style="position:absolute;left:233.60px;top:266.00px;font-size:13px;line-height:1;color:#000;font-weight:400;letter-spacing:0.497px;white-space:pre;">Kaukolämpökannake, kuumasinkitty</div>
<div style="position:absolute;left:773.50px;top:266.00px;font-size:13px;line-height:1;color:#000;font-weight:400;letter-spacing:-0.655px;white-space:pre;">SFS-EN 1461</div>
<div style="position:absolute;left:957.60px;top:266.00px;font-size:13px;line-height:1;color:#000;font-weight:400;letter-spacing:-0.661px;white-space:pre;">SKID</div>
<div style="position:absolute;left:12.88px;top:286.00px;font-size:13px;line-height:1;color:#111;font-weight:400;letter-spacing:0.000px;white-space:pre;">6</div>
<div style="position:absolute;left:32.00px;top:286.00px;font-size:13px;line-height:1;color:#000;font-weight:400;letter-spacing:-0.092px;white-space:pre;">5702-D110-H130</div>
<div style="position:absolute;left:233.60px;top:286.00px;font-size:13px;line-height:1;color:#000;font-weight:400;letter-spacing:0.497px;white-space:pre;">Kaukolämpökannake, kuumasinkitty</div>
<div style="position:absolute;left:773.50px;top:286.00px;font-size:13px;line-height:1;color:#000;font-weight:400;letter-spacing:-0.655px;white-space:pre;">SFS-EN 1461</div>
<div style="position:absolute;left:957.60px;top:286.00px;font-size:13px;line-height:1;color:#000;font-weight:400;letter-spacing:-0.661px;white-space:pre;">SKID</div>
<div style="position:absolute;left:12.88px;top:306.00px;font-size:13px;line-height:1;color:#111;font-weight:400;letter-spacing:0.000px;white-space:pre;">7</div>
<div style="position:absolute;left:32.00px;top:306.00px;font-size:13px;line-height:1;color:#000;font-weight:400;letter-spacing:-0.160px;white-space:pre;">5703-D125-H138</div>
<div style="position:absolute;left:233.60px;top:306.00px;font-size:13px;line-height:1;color:#000;font-weight:400;letter-spacing:0.497px;white-space:pre;">Kaukolämpökannake, kuumasinkitty</div>
<div style="position:absolute;left:773.50px;top:306.00px;font-size:13px;line-height:1;color:#000;font-weight:400;letter-spacing:-0.655px;white-space:pre;">SFS-EN 1461</div>
<div style="position:absolute;left:957.60px;top:306.00px;font-size:13px;line-height:1;color:#000;font-weight:400;letter-spacing:-0.661px;white-space:pre;">SKID</div>
<div style="position:absolute;left:12.88px;top:326.00px;font-size:13px;line-height:1;color:#111;font-weight:400;letter-spacing:0.000px;white-space:pre;">8</div>
<div style="position:absolute;left:32.00px;top:326.00px;font-size:13px;line-height:1;color:#000;font-weight:400;letter-spacing:-0.160px;white-space:pre;">5704-D140-H140</div>
<div style="position:absolute;left:233.60px;top:326.00px;font-size:13px;line-height:1;color:#000;font-weight:400;letter-spacing:0.497px;white-space:pre;">Kaukolämpökannake, kuumasinkitty</div>
<div style="position:absolute;left:773.50px;top:326.00px;font-size:13px;line-height:1;color:#000;font-weight:400;letter-spacing:-0.655px;white-space:pre;">SFS-EN 1461</div>
<div style="position:absolute;left:957.60px;top:326.00px;font-size:13px;line-height:1;color:#000;font-weight:400;letter-spacing:-0.661px;white-space:pre;">SKID</div>
<div style="position:absolute;left:12.88px;top:346.00px;font-size:13px;line-height:1;color:#111;font-weight:400;letter-spacing:0.000px;white-space:pre;">9</div>
<div style="position:absolute;left:32.00px;top:346.00px;font-size:13px;line-height:1;color:#000;font-weight:400;letter-spacing:-0.160px;white-space:pre;">5705-D160-H154</div>
<div style="position:absolute;left:233.60px;top:346.00px;font-size:13px;line-height:1;color:#000;font-weight:400;letter-spacing:0.497px;white-space:pre;">Kaukolämpökannake, kuumasinkitty</div>
<div style="position:absolute;left:773.50px;top:346.00px;font-size:13px;line-height:1;color:#000;font-weight:400;letter-spacing:-0.655px;white-space:pre;">SFS-EN 1461</div>
<div style="position:absolute;left:957.60px;top:346.00px;font-size:13px;line-height:1;color:#000;font-weight:400;letter-spacing:-0.661px;white-space:pre;">SKID</div>
<div style="position:absolute;left:9.27px;top:366.00px;font-size:13px;line-height:1;color:#111;font-weight:400;letter-spacing:0.000px;white-space:pre;">10</div>
<div style="position:absolute;left:32.00px;top:366.00px;font-size:13px;line-height:1;color:#000;font-weight:400;letter-spacing:-0.160px;white-space:pre;">5706-D180-H155</div>
<div style="position:absolute;left:233.60px;top:366.00px;font-size:13px;line-height:1;color:#000;font-weight:400;letter-spacing:0.497px;white-space:pre;">Kaukolämpökannake, kuumasinkitty</div>
<div style="position:absolute;left:773.50px;top:366.00px;font-size:13px;line-height:1;color:#000;font-weight:400;letter-spacing:-0.655px;white-space:pre;">SFS-EN 1461</div>
<div style="position:absolute;left:957.60px;top:366.00px;font-size:13px;line-height:1;color:#000;font-weight:400;letter-spacing:-0.661px;white-space:pre;">SKID</div>
<div style="position:absolute;left:9.75px;top:386.00px;font-size:13px;line-height:1;color:#111;font-weight:400;letter-spacing:0.000px;white-space:pre;">11</div>
<div style="position:absolute;left:32.00px;top:386.00px;font-size:13px;line-height:1;color:#000;font-weight:400;letter-spacing:-0.160px;white-space:pre;">5707-D200-H163</div>
<div style="position:absolute;left:233.60px;top:386.00px;font-size:13px;line-height:1;color:#000;font-weight:400;letter-spacing:0.497px;white-space:pre;">Kaukolämpökannake, kuumasinkitty</div>
<div style="position:absolute;left:773.50px;top:386.00px;font-size:13px;line-height:1;color:#000;font-weight:400;letter-spacing:-0.655px;white-space:pre;">SFS-EN 1461</div>
<div style="position:absolute;left:957.60px;top:386.00px;font-size:13px;line-height:1;color:#000;font-weight:400;letter-spacing:-0.661px;white-space:pre;">SKID</div>
<div style="position:absolute;left:9.27px;top:406.00px;font-size:13px;line-height:1;color:#111;font-weight:400;letter-spacing:0.000px;white-space:pre;">12</div>
<div style="position:absolute;left:32.00px;top:406.00px;font-size:13px;line-height:1;color:#000;font-weight:400;letter-spacing:-0.160px;white-space:pre;">5708-D225-H177</div>
<div style="position:absolute;left:233.60px;top:406.00px;font-size:13px;line-height:1;color:#000;font-weight:400;letter-spacing:0.497px;white-space:pre;">Kaukolämpökannake, kuumasinkitty</div>
<div style="position:absolute;left:773.50px;top:406.00px;font-size:13px;line-height:1;color:#000;font-weight:400;letter-spacing:-0.655px;white-space:pre;">SFS-EN 1461</div>
<div style="position:absolute;left:957.60px;top:406.00px;font-size:13px;line-height:1;color:#000;font-weight:400;letter-spacing:-0.661px;white-space:pre;">SKID</div>
<div style="position:absolute;left:9.27px;top:426.00px;font-size:13px;line-height:1;color:#111;font-weight:400;letter-spacing:0.000px;white-space:pre;">13</div>
<div style="position:absolute;left:32.00px;top:426.00px;font-size:13px;line-height:1;color:#000;font-weight:400;letter-spacing:-0.160px;white-space:pre;">5709-D250-H190</div>
<div style="position:absolute;left:233.60px;top:426.00px;font-size:13px;line-height:1;color:#000;font-weight:400;letter-spacing:0.497px;white-space:pre;">Kaukolämpökannake, kuumasinkitty</div>
<div style="position:absolute;left:773.50px;top:426.00px;font-size:13px;line-height:1;color:#000;font-weight:400;letter-spacing:-0.655px;white-space:pre;">SFS-EN 1461</div>
<div style="position:absolute;left:957.60px;top:426.00px;font-size:13px;line-height:1;color:#000;font-weight:400;letter-spacing:-0.661px;white-space:pre;">SKID</div>
<div style="position:absolute;left:9.27px;top:446.00px;font-size:13px;line-height:1;color:#111;font-weight:400;letter-spacing:0.000px;white-space:pre;">14</div>
<div style="position:absolute;left:32.00px;top:446.00px;font-size:13px;line-height:1;color:#000;font-weight:400;letter-spacing:-0.160px;white-space:pre;">5710-D280-H205</div>
<div style="position:absolute;left:233.60px;top:446.00px;font-size:13px;line-height:1;color:#000;font-weight:400;letter-spacing:0.497px;white-space:pre;">Kaukolämpökannake, kuumasinkitty</div>
<div style="position:absolute;left:773.50px;top:446.00px;font-size:13px;line-height:1;color:#000;font-weight:400;letter-spacing:-0.655px;white-space:pre;">SFS-EN 1461</div>
<div style="position:absolute;left:957.60px;top:446.00px;font-size:13px;line-height:1;color:#000;font-weight:400;letter-spacing:-0.661px;white-space:pre;">SKID</div>
<div style="position:absolute;left:9.27px;top:466.00px;font-size:13px;line-height:1;color:#111;font-weight:400;letter-spacing:0.000px;white-space:pre;">15</div>
<div style="position:absolute;left:32.00px;top:466.00px;font-size:13px;line-height:1;color:#000;font-weight:400;letter-spacing:-0.092px;white-space:pre;">5711-D315-H226</div>
<div style="position:absolute;left:233.60px;top:466.00px;font-size:13px;line-height:1;color:#000;font-weight:400;letter-spacing:0.497px;white-space:pre;">Kaukolämpökannake, kuumasinkitty</div>
<div style="position:absolute;left:773.50px;top:466.00px;font-size:13px;line-height:1;color:#000;font-weight:400;letter-spacing:-0.655px;white-space:pre;">SFS-EN 1461</div>
<div style="position:absolute;left:957.60px;top:466.00px;font-size:13px;line-height:1;color:#000;font-weight:400;letter-spacing:-0.661px;white-space:pre;">SKID</div>
<div style="position:absolute;left:9.27px;top:486.00px;font-size:13px;line-height:1;color:#111;font-weight:400;letter-spacing:0.000px;white-space:pre;">16</div>
<div style="position:absolute;left:32.00px;top:486.00px;font-size:13px;line-height:1;color:#000;font-weight:400;letter-spacing:-0.160px;white-space:pre;">5712-D355-H247</div>
<div style="position:absolute;left:233.60px;top:486.00px;font-size:13px;line-height:1;color:#000;font-weight:400;letter-spacing:0.497px;white-space:pre;">Kaukolämpökannake, kuumasinkitty</div>
<div style="position:absolute;left:773.50px;top:486.00px;font-size:13px;line-height:1;color:#000;font-weight:400;letter-spacing:-0.655px;white-space:pre;">SFS-EN 1461</div>
<div style="position:absolute;left:957.60px;top:486.00px;font-size:13px;line-height:1;color:#000;font-weight:400;letter-spacing:-0.661px;white-space:pre;">SKID</div>
<div style="position:absolute;left:9.27px;top:506.00px;font-size:13px;line-height:1;color:#111;font-weight:400;letter-spacing:0.000px;white-space:pre;">17</div>
<div style="position:absolute;left:32.00px;top:506.00px;font-size:13px;line-height:1;color:#000;font-weight:400;letter-spacing:-0.160px;white-space:pre;">5713-D400-H271</div>
<div style="position:absolute;left:233.60px;top:506.00px;font-size:13px;line-height:1;color:#000;font-weight:400;letter-spacing:0.497px;white-space:pre;">Kaukolämpökannake, kuumasinkitty</div>
<div style="position:absolute;left:773.50px;top:506.00px;font-size:13px;line-height:1;color:#000;font-weight:400;letter-spacing:-0.655px;white-space:pre;">SFS-EN 1461</div>
<div style="position:absolute;left:957.60px;top:506.00px;font-size:13px;line-height:1;color:#000;font-weight:400;letter-spacing:-0.661px;white-space:pre;">SKID</div>
<div style="position:absolute;left:9.27px;top:526.00px;font-size:13px;line-height:1;color:#111;font-weight:400;letter-spacing:0.000px;white-space:pre;">18</div>
<div style="position:absolute;left:32.00px;top:526.00px;font-size:13px;line-height:1;color:#000;font-weight:400;letter-spacing:-0.160px;white-space:pre;">5714-D450-H290</div>
<div style="position:absolute;left:233.60px;top:526.00px;font-size:13px;line-height:1;color:#000;font-weight:400;letter-spacing:0.497px;white-space:pre;">Kaukolämpökannake, kuumasinkitty</div>
<div style="position:absolute;left:773.50px;top:526.00px;font-size:13px;line-height:1;color:#000;font-weight:400;letter-spacing:-0.655px;white-space:pre;">SFS-EN 1461</div>
<div style="position:absolute;left:957.60px;top:526.00px;font-size:13px;line-height:1;color:#000;font-weight:400;letter-spacing:-0.661px;white-space:pre;">SKID</div>
<div style="position:absolute;left:9.27px;top:546.00px;font-size:13px;line-height:1;color:#111;font-weight:400;letter-spacing:0.000px;white-space:pre;">19</div>
<div style="position:absolute;left:32.00px;top:546.00px;font-size:13px;line-height:1;color:#000;font-weight:400;letter-spacing:-0.160px;white-space:pre;">5715-D500-H318</div>
<div style="position:absolute;left:233.60px;top:546.00px;font-size:13px;line-height:1;color:#000;font-weight:400;letter-spacing:0.497px;white-space:pre;">Kaukolämpökannake, kuumasinkitty</div>
<div style="position:absolute;left:773.50px;top:546.00px;font-size:13px;line-height:1;color:#000;font-weight:400;letter-spacing:-0.655px;white-space:pre;">SFS-EN 1461</div>
<div style="position:absolute;left:957.60px;top:546.00px;font-size:13px;line-height:1;color:#000;font-weight:400;letter-spacing:-0.661px;white-space:pre;">SKID</div>
<div style="position:absolute;left:9.27px;top:566.00px;font-size:13px;line-height:1;color:#111;font-weight:400;letter-spacing:0.000px;white-space:pre;">20</div>
<div style="position:absolute;left:32.00px;top:566.00px;font-size:13px;line-height:1;color:#000;font-weight:400;letter-spacing:-0.160px;white-space:pre;">5716-D560-H352</div>
<div style="position:absolute;left:233.60px;top:566.00px;font-size:13px;line-height:1;color:#000;font-weight:400;letter-spacing:0.497px;white-space:pre;">Kaukolämpökannake, kuumasinkitty</div>
<div style="position:absolute;left:773.50px;top:566.00px;font-size:13px;line-height:1;color:#000;font-weight:400;letter-spacing:-0.655px;white-space:pre;">SFS-EN 1461</div>
<div style="position:absolute;left:957.60px;top:566.00px;font-size:13px;line-height:1;color:#000;font-weight:400;letter-spacing:-0.661px;white-space:pre;">SKID</div>
<div style="position:absolute;left:9.27px;top:586.00px;font-size:13px;line-height:1;color:#111;font-weight:400;letter-spacing:0.000px;white-space:pre;">21</div>
<div style="position:absolute;left:32.00px;top:586.00px;font-size:13px;line-height:1;color:#000;font-weight:400;letter-spacing:-0.160px;white-space:pre;">5717-D630-H390</div>
<div style="position:absolute;left:233.60px;top:586.00px;font-size:13px;line-height:1;color:#000;font-weight:400;letter-spacing:0.497px;white-space:pre;">Kaukolämpökannake, kuumasinkitty</div>
<div style="position:absolute;left:773.50px;top:586.00px;font-size:13px;line-height:1;color:#000;font-weight:400;letter-spacing:-0.655px;white-space:pre;">SFS-EN 1461</div>
<div style="position:absolute;left:957.60px;top:586.00px;font-size:13px;line-height:1;color:#000;font-weight:400;letter-spacing:-0.661px;white-space:pre;">SKID</div>
<div style="position:absolute;left:9.27px;top:606.00px;font-size:13px;line-height:1;color:#111;font-weight:400;letter-spacing:0.000px;white-space:pre;">22</div>
<div style="position:absolute;left:32.00px;top:606.00px;font-size:13px;line-height:1;color:#000;font-weight:400;letter-spacing:-0.160px;white-space:pre;">5718-D710-H406</div>
<div style="position:absolute;left:233.60px;top:606.00px;font-size:13px;line-height:1;color:#000;font-weight:400;letter-spacing:0.497px;white-space:pre;">Kaukolämpökannake, kuumasinkitty</div>
<div style="position:absolute;left:773.50px;top:606.00px;font-size:13px;line-height:1;color:#000;font-weight:400;letter-spacing:-0.655px;white-space:pre;">SFS-EN 1461</div>
<div style="position:absolute;left:957.60px;top:606.00px;font-size:13px;line-height:1;color:#000;font-weight:400;letter-spacing:-0.661px;white-space:pre;">SKID</div>
<div style="position:absolute;left:9.27px;top:626.00px;font-size:13px;line-height:1;color:#111;font-weight:400;letter-spacing:0.000px;white-space:pre;">23</div>
<div style="position:absolute;left:32.00px;top:626.00px;font-size:13px;line-height:1;color:#000;font-weight:400;letter-spacing:-0.160px;white-space:pre;">5719-D800-H456</div>
<div style="position:absolute;left:233.60px;top:626.00px;font-size:13px;line-height:1;color:#000;font-weight:400;letter-spacing:0.497px;white-space:pre;">Kaukolämpökannake, kuumasinkitty</div>
<div style="position:absolute;left:773.50px;top:626.00px;font-size:13px;line-height:1;color:#000;font-weight:400;letter-spacing:-0.655px;white-space:pre;">SFS-EN 1461</div>
<div style="position:absolute;left:957.60px;top:626.00px;font-size:13px;line-height:1;color:#000;font-weight:400;letter-spacing:-0.661px;white-space:pre;">SKID</div>
</div></div>
</body></html>
